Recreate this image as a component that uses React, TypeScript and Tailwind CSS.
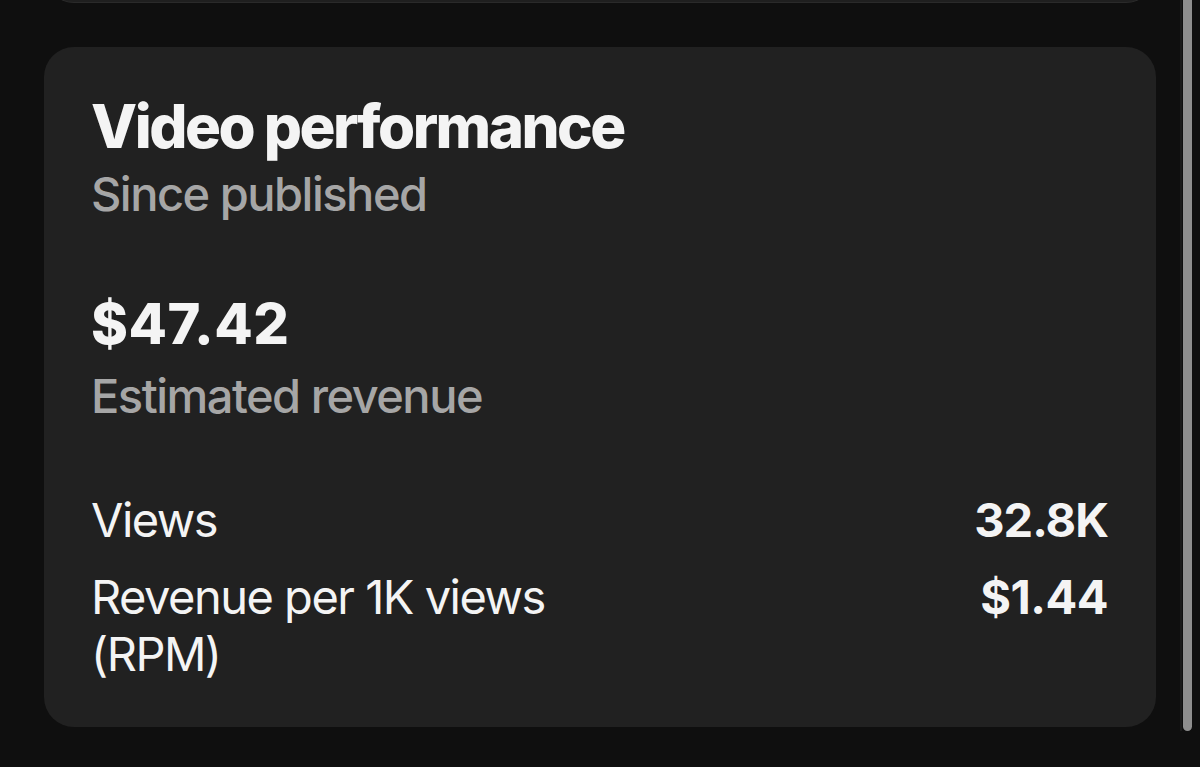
import React from "react";

export default function App() {
  const font = { fontFamily: "Inter, 'Noto Sans', 'Liberation Sans', sans-serif" };
  return (
    <div
      className="relative h-[767px] w-[1200px] overflow-hidden bg-[#0f0f0f] text-[#f4f4f4]"
      style={font}
    >
      <div className="flex flex-col pl-[44px] w-[1156px]">
        <div className="mt-[-60px] h-[63px] rounded-[30px] bg-[#1f1f1f] border border-[#2a2a2a]" />
        <div className="mt-[44px] h-[680px] rounded-[30px] bg-[#212121] pt-[47px] pl-[47px] pr-[48px] flex flex-col">
          <div className="mt-[1px] text-[60px] leading-[62px] font-extrabold tracking-[-2.5px]">Video performance</div>
          <div className="mt-[13px] text-[47px] leading-[47px] font-medium text-[#a6a6a6] tracking-[-1.5px]">Since published</div>
          <div className="mt-[80px] text-[56px] leading-[55px] font-extrabold tracking-[0.5px]">$47.42</div>
          <div className="mt-[20px] text-[47px] leading-[47px] font-medium text-[#a6a6a6] tracking-[-1.5px]">Estimated revenue</div>
          <div className="mt-[77px] flex justify-between text-[47px] leading-[47px]">
            <span className="font-normal tracking-[-1.5px]">Views</span>
            <span className="font-bold tracking-[-1px]">32.8K</span>
          </div>
          <div className="mt-[25px] flex justify-between text-[47px] leading-[57px]">
            <span className="font-normal max-w-[540px] tracking-[-1.5px]">Revenue per 1K views (RPM)</span>
            <span className="font-bold tracking-[-0.5px]">$1.44</span>
          </div>
        </div>
      </div>
      <div className="absolute left-[1180px] top-0 h-[731px] w-[2px] bg-[#1a1a1a]" />
      <div className="absolute left-[1183px] top-0 h-[731px] w-[9px] rounded-b-full bg-[#8e8e8e]" />
    </div>
  );
}
